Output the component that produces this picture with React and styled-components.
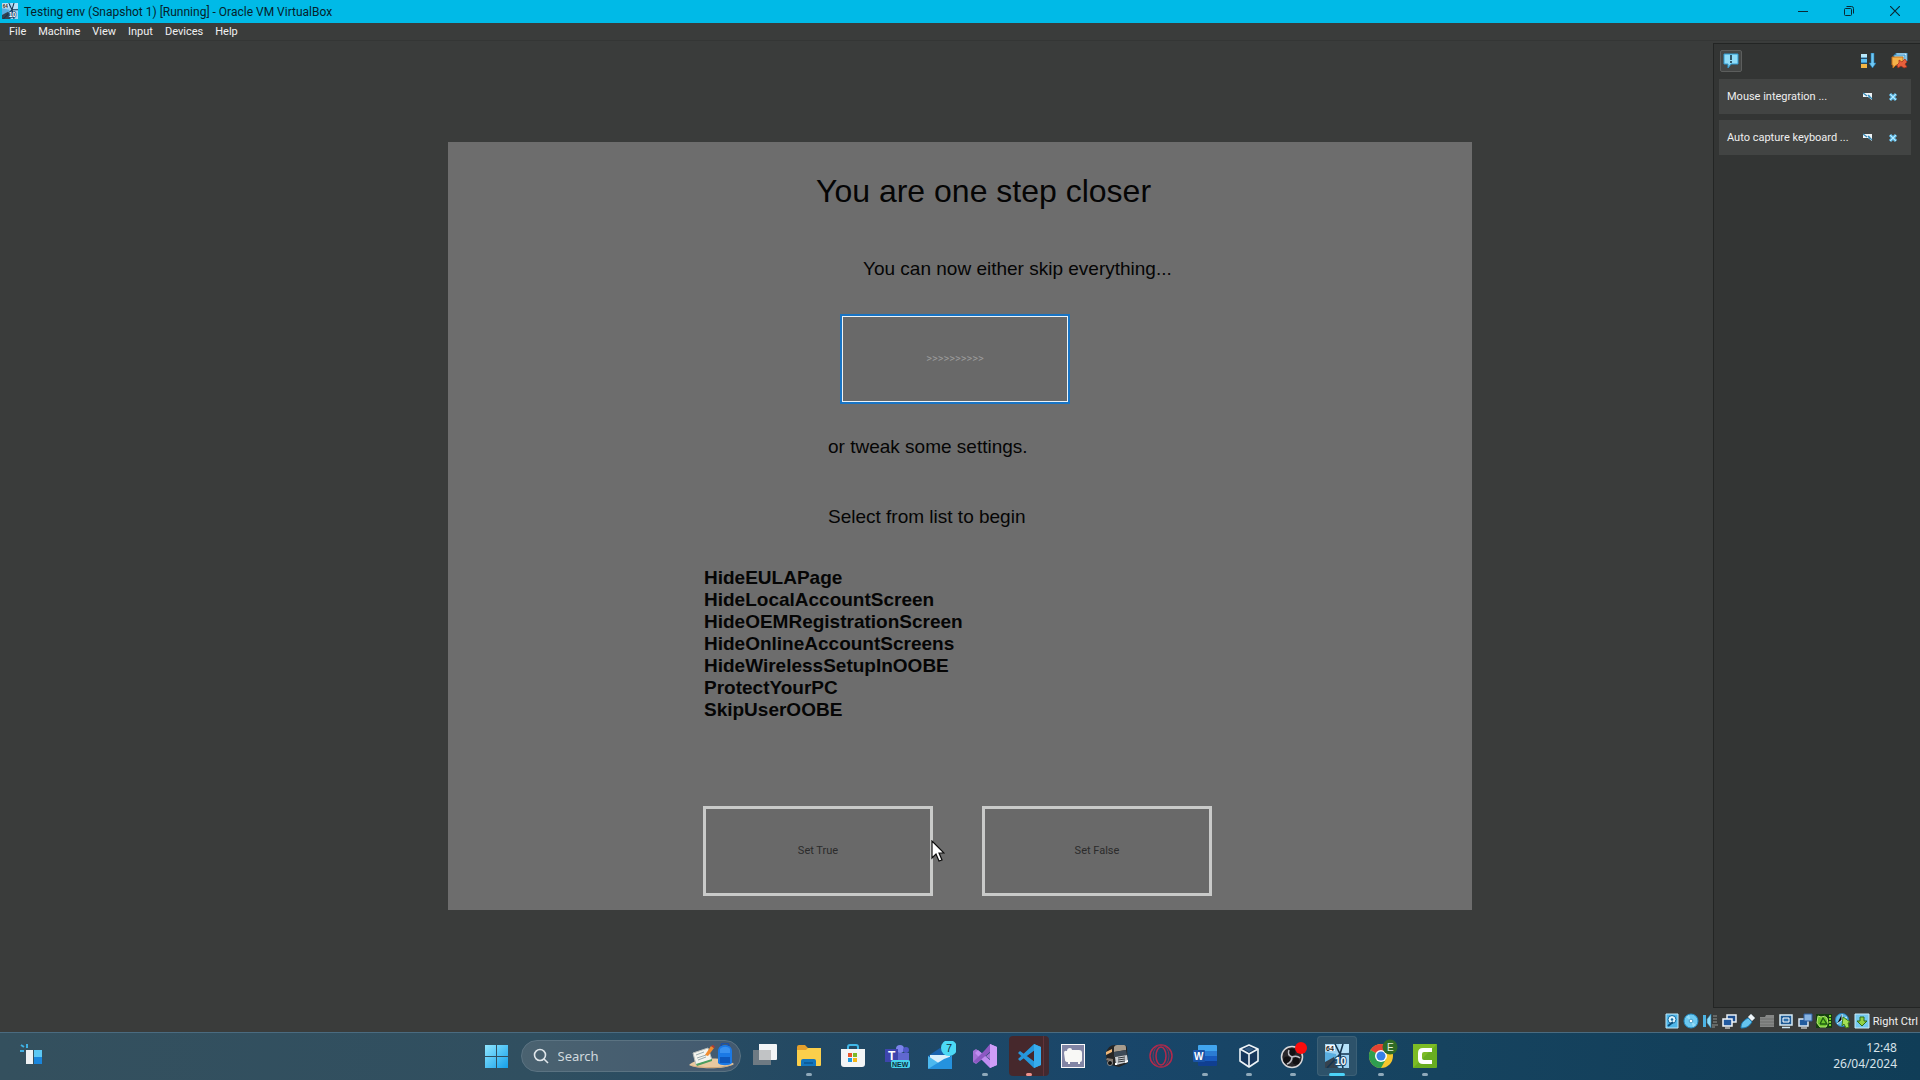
import React from "react";
import styled, { createGlobalStyle } from "styled-components";

const uiFont = '"Noto Sans", "Open Sans", sans-serif';
const windowFont = 'Roboto, "Noto Sans", sans-serif';
const guestFont = '"Liberation Sans", Arial, sans-serif';

const GlobalStyle = createGlobalStyle`
  *, *::before, *::after { box-sizing: border-box; }
  body { margin: 0; background: #3a3c3b; font-family: ${uiFont}; }
  button, input { font: inherit; color: inherit; }
  button { border: 0; padding: 0; background: none; cursor: default; }
  svg { display: block; flex: none; }
`;

const Desktop = styled.div`
  min-height: 100vh;
  display: flex;
  flex-direction: column;
`;

/* ---- window frame ---- */
const TitleBar = styled.header`
  display: flex;
  align-items: center;
  height: 23px;
  padding: 0 2px 2px;
  gap: 6px;
  background: #00bae7;
  color: #06222b;
`;
const Title = styled.h1`
  flex: 1;
  margin: 0;
  padding-top: 2px;
  font-family: ${windowFont};
  font-size: 12px;
  line-height: 20px;
  font-weight: 400;
`;
const Caption = styled.button`
  display: flex;
  justify-content: center;
  width: 46px;
`;
const CaptionGroup = styled.div`
  display: flex;
`;
const MenuBar = styled.nav`
  display: flex;
  height: 18px;
  padding: 0 3px;
  border-bottom: 1px solid #343635;
  color: #f0f0f0;
  font-family: ${windowFont};
`;
const MenuItem = styled.button`
  padding: 0 6px;
  font-size: 11px;
  line-height: 18px;
`;
const Viewport = styled.main`
  position: relative;
  flex: 1;
  display: flex;
  align-items: center;
  justify-content: center;
`;

/* ---- guest display ---- */
const Guest = styled.section`
  width: 1024px;
  max-width: 100%;
  min-height: 768px;
  padding: 31px 255px 14px;
  display: flex;
  flex-direction: column;
  align-items: flex-start;
  background: #6d6d6d;
  color: #050505;
  font-family: ${guestFont};
  font-size: 19px;
  line-height: 24px;
`;
const Heading = styled.h2`
  margin: 0 0 48px 113px;
  font-size: 32px;
  line-height: 36px;
  font-weight: 400;
  white-space: nowrap;
`;
const Lead = styled.p`
  margin: 0 0 ${(p) => p.$after}px ${(p) => p.$indent}px;
  white-space: nowrap;
`;
const PushButton = styled.button`
  width: 230px;
  height: 90px;
  background: #696969;
  border: 3px solid #c9cac9;
  color: #2b2b2b;
  font-family: ${windowFont};
  font-size: 11px;
`;
const SkipButton = styled(PushButton)`
  margin: 0 0 31px 137px;
  border: 2px solid #1874c4;
  box-shadow: inset 0 0 0 1px #eef4f8;
  color: #9c9c9c;
`;
const SettingList = styled.ul`
  margin: 0 0 auto;
  padding: 0 1px;
  list-style: none;
  font-weight: 700;
  line-height: 22px;
`;
const Actions = styled.div`
  display: flex;
  gap: 49px;
`;
const Pointer = styled.div`
  position: absolute;
  left: calc(50% - 29px);
  top: calc(50% + 314px);
`;

/* ---- notification centre ---- */
const Panel = styled.aside`
  position: absolute;
  top: 2px;
  right: 0;
  bottom: 3px;
  width: 207px;
  padding: 6px 9px 0 5px;
  display: flex;
  flex-direction: column;
  gap: 6px;
  background: #333534;
  border: 1px solid #232524;
  border-right: 0;
  color: #eeeeee;
`;
const PanelTools = styled.div`
  display: flex;
  align-items: center;
  gap: 15px;
  height: 22px;
  margin-bottom: 1px;
  padding: 0 3px 0 1px;
`;
const Toggle = styled.button`
  display: flex;
  align-items: center;
  justify-content: center;
  width: 22px;
  height: 22px;
  margin-right: auto;
  background: #444645;
  border: 1px solid #5c5e5d;
  border-radius: 2px;
`;
const Notice = styled.article`
  display: flex;
  align-items: center;
  justify-content: space-between;
  height: 35px;
  padding: 0 13px 0 8px;
  background: #424443;
  font-family: ${windowFont};
  font-size: 11px;
`;
const NoticeText = styled.span`
  white-space: nowrap;
`;
const NoticeTools = styled.div`
  display: flex;
  gap: 15px;
`;

/* ---- status bar ---- */
const StatusBar = styled.footer`
  display: flex;
  align-items: center;
  justify-content: flex-end;
  height: 21px;
  gap: 3px;
  padding: 0 2px 2px 0;
  color: #f0f0f0;
  font-family: ${windowFont};
  font-size: 11px;
`;
const HostKey = styled.span`
  padding-top: 2px;
`;

/* ---- taskbar ---- */
const Taskbar = styled.nav`
  display: grid;
  grid-template-columns: 1fr auto 1fr;
  align-items: center;
  height: 48px;
  padding-bottom: 1px;
  border-top: 1px solid #4a6b80;
  background: linear-gradient(90deg, #34505e 0%, #304f60 28%, #234963 42%, #19466a 58%, #16435f 75%, #103d57 100%);
`;
const Widgets = styled.button`
  justify-self: start;
  margin-left: 20px;
`;
const Apps = styled.div`
  display: flex;
  align-items: center;
`;
const TaskButton = styled.button`
  display: flex;
  align-items: center;
  justify-content: center;
  position: relative;
  width: 40px;
  height: 40px;
  margin: 0 2px;
  border-radius: 4px;
  background: ${(p) => p.$tile || "none"};
  box-shadow: ${(p) => (p.$ring ? `inset 0 0 0 1px ${p.$ring}` : "none")};
  &::after {
    content: "";
    position: absolute;
    left: calc(50% - ${(p) => (p.$wide ? 8 : 3)}px);
    bottom: 0;
    width: ${(p) => (p.$wide ? 16 : 6)}px;
    height: 3px;
    border-radius: 2px;
    background: ${(p) => p.$mark || "none"};
  }
`;
const SearchBox = styled.label`
  display: flex;
  align-items: center;
  width: 220px;
  height: 32px;
  margin: 0 2px 0 3px;
  padding: 0 5px 0 11px;
  gap: 9px;
  border: 1px solid #5b7382;
  border-radius: 16px;
  background: linear-gradient(90deg, #4a6270, #435a70);
  color: #d5dde2;
`;
const SearchInput = styled.input.attrs({ type: "text" })`
  flex: 1;
  min-width: 0;
  padding: 0;
  border: 0;
  outline: 0;
  background: none;
  font-size: 13px;
  line-height: 20px;
  &::placeholder { color: #d0d9de; opacity: 1; }
`;
const Clock = styled.time`
  justify-self: end;
  padding-right: 23px;
  text-align: right;
  color: #d7e3ea;
  font-size: 12px;
  line-height: 16px;
`;
const ClockLine = styled.span`
  display: block;
`;

const Svg = ({ w = 24, h = w, vb, children }) => (
  <svg width={w} height={h} viewBox={vb || `0 0 ${w} ${h}`} aria-hidden="true">{children}</svg>
);

const VmIcon = ({ size }) => (
  <Svg w={size} vb="0 0 24 24">
    <rect width="24" height="24" fill="#9fd3f2" />
    <path d="M0 8l11 2 3 14H0z" fill="#5aaee0" />
    <path d="M14 0h10v8l-9 3z" fill="#b7e2f8" />
    <path d="M0 18l9-5 4 11H0z" fill="#35424e" />
    <path d="M10 0l5 10 9 0M15 10L2 24M15 10l3 14M18 0l-3 10" stroke="#16354f" strokeWidth="1.600" fill="none" />
    <rect x="1" y="1" width="9" height="6" fill="#f6f6f6" />
    <text x="1" y="7" fontSize="7" fontWeight="700" fontFamily="Liberation Sans" fill="#222">64</text>
    <text x="10" y="21" fontSize="10" fontWeight="700" fontFamily="Liberation Sans" fill="#fff" stroke="#1b4768" strokeWidth="2" paintOrder="stroke">10</text>
  </Svg>
);

const Bubble = () => (
  <Svg w={16}>
    <path d="M1 1h14v10H8l-3 4v-4H1z" fill="#8fdcf8" stroke="#2e9ad0" />
    <path d="M8 2v5M8 8v2" stroke="#102a38" strokeWidth="1.500" />
  </Svg>
);
const SortIcon = () => (
  <Svg w={16}>
    <path d="M1 1h6v4H1z" fill="#b9e9fb" /><path d="M1 6h6v4H1z" fill="#5fbff0" /><path d="M1 11h6v4H1z" fill="#f2b544" />
    <path d="M1 5h6M1 10h6" stroke="#1a6ea8" />
    <path d="M11 0h3v10h2l-3.500 5L9 10h2z" fill="#6fc8f3" stroke="#1b77b4" strokeWidth=".6" />
  </Svg>
);
const ClearIcon = () => (
  <Svg w={17} h={16}>
    <path d="M5 0h11v8H5z" fill="#d6effb" stroke="#378fc6" /><path d="M3 2h11v8H3z" fill="#9bd8f4" stroke="#378fc6" />
    <path d="M1 4h11v8H5l-3 3v-3H1z" fill="#f5b34a" stroke="#c9731d" />
    <path d="M8 7l3 2 3-3 2 3-2 2 2 3-3 1-3-2-3 2-1-3 2-2z" fill="#e8603c" stroke="#a52d1a" strokeWidth=".7" />
  </Svg>
);
const DetailIcon = () => (
  <Svg w={10} h={10}>
    <path d="M0 1h9v7L5 5H0z" fill="#eef4f7" /><path d="M0 1l4 3M5 3l4 4M6 3v3" stroke="#3388b5" strokeWidth="1.200" />
  </Svg>
);
const DismissIcon = () => (
  <Svg w={10}>
    <path d="M2 2l6 6M8 2L2 8" stroke="#68c6f3" strokeWidth="3" />
    <path d="M2 2l6 6M8 2L2 8" stroke="#b8e9fd" strokeWidth="1" />
  </Svg>
);

const statusIcons = [
  ["Hard disks", <><path d="M2 1h12v14H2z" fill="#4fb6e8" stroke="#bfe8fa" /><circle cx="8" cy="6.500" r="4" fill="#dff4fd" stroke="#126a9e" /><circle cx="8" cy="6.500" r="1.300" fill="#126a9e" /><path d="M4 13l5-4" stroke="#0b4e7c" strokeWidth="2" /></>],
  ["Optical drives", <><circle cx="8" cy="8" r="7" fill="#6cc9f1" stroke="#248dc4" /><path d="M8 8L3 4l3-2zM8 8l5 4-3 2z" fill="#93dbf7" /><circle cx="8" cy="8" r="1.800" fill="#f5fcff" stroke="#0f6fa5" strokeWidth=".6" /></>],
  ["Audio", <><path d="M1 2h3v12H1z" fill="#4cb4e4" /><path d="M5 6l4-5v14l-4-5z" fill="#8fdbf8" stroke="#2279a8" strokeWidth=".6" /><path d="M11 3h4M11 6h4M11 9h4M10 12h6M10 14h3" stroke="#747776" strokeWidth="1.500" /></>],
  ["Network", <><path d="M6 2h9v7H6z" fill="#1d4f91" stroke="#e9eff5" strokeWidth="1.500" /><path d="M2 6h9v7H2z" fill="#21599f" stroke="#f2f6fa" strokeWidth="1.500" /><path d="M4 15h5" stroke="#fff" /></>],
  ["USB", <><path d="M1 15c0-5 2-7 7-10l4 4c-3 4-5 6-11 6z" fill="#65c4ef" stroke="#1c7fb9" /><path d="M8 4l3-3 4 4-3 3z" fill="#f0f5f8" stroke="#9fb1bb" strokeWidth=".6" /></>],
  ["Shared folders", <><path d="M1 4h5l1-2h8v12H1z" fill="#858786" /><path d="M1 6h14M1 9h14M1 12h14" stroke="#6c6e6d" /></>],
  ["Display", <><path d="M2 2h12v10H2z" fill="#1e5a94" stroke="#d7ebf6" strokeWidth="1.500" /><path d="M5 5h6v4H5z" fill="#2b70ae" stroke="#fff" /><path d="M4 14.500h8" stroke="#cde7f5" strokeWidth="1.500" /></>],
  ["Recording", <><path d="M2 6h9v7H2z" fill="#215b9e" stroke="#dce9f5" strokeWidth="1.500" /><path d="M7 1h8v7H7z" fill="#86b2e0" stroke="#2d5fa0" /><path d="M4 15h6" stroke="#fff" /></>],
  ["Processor", <><path d="M0 1h16v14H0z" fill="#153f10" /><path d="M2 3l3 1q4-2 6 1l1 5-2 4H4l-3-4z" fill="#6cc62c" stroke="#b7e979" /><path d="M4 11l3-6 4 6H4" stroke="#1d5c10" strokeWidth="1.300" fill="none" /><path d="M14 2v12" stroke="#7ad52f" strokeWidth="2" strokeDasharray="2 1" /></>],
  ["Mouse integration", <><circle cx="7" cy="7" r="6.500" fill="#5fb9e8" stroke="#297eb5" /><path d="M7 1v6L2 11M7 7l5-3" stroke="#d9f2fd" /><path d="M8 4l7 5-2 1 1 4-3 1-2-4-2 2z" fill="#a5e055" stroke="#3f7e17" /></>],
  ["Keyboard capture", <><path d="M1 1h14v14H1z" fill="#75c9ef" stroke="#c9ebf9" /><path d="M6 4h4v4h3l-5 5-5-5h3z" fill="#93d243" stroke="#2f6c19" /></>],
];

const Search = () => (
  <Svg w={16}>
    <circle cx="7" cy="7" r="5.500" fill="none" stroke="#e0e6ea" strokeWidth="1.600" /><path d="M11 11l4 4" stroke="#e0e6ea" strokeWidth="1.600" />
  </Svg>
);
const School = () => (
  <Svg w={46} h={26}>
    <path d="M0 22c8-8 35-9 45-1-6 5-36 6-45 1z" fill="#e9c9a0" /><path d="M1 22c12 3 34 3 43-1-6 5-35 5-43 1z" fill="#c99e6c" />
    <path d="M4 10l15-5 4 12-16 5z" fill="#f3f3ee" stroke="#b7bdba" /><path d="M7 21l16-5v2L8 23z" fill="#4b9e5f" />
    <path d="M7 12l8-3M8 15l9-3M9 17l8-3" stroke="#9aabae" /><path d="M16 12l6-9 3 2-6 8z" fill="#f18b2e" /><path d="M22 3l2-1 2 2-1 1z" fill="#b8392d" />
    <path d="M29 20V8c0-8 14-8 14 0v12c-2 3-12 3-14 0z" fill="#1b79e5" /><path d="M32 3c0-4 8-4 8 0" fill="none" stroke="#1b4fa8" strokeWidth="1.500" />
    <path d="M31 6c3-3 8-3 10 0v4H31z" fill="#3991f0" /><path d="M31 14h10v6H31z" fill="#0d58bd" />
  </Svg>
);

const icons = {
  start: <Svg><defs><linearGradient id="st" x1="0" y1="0" x2="1" y2="1"><stop stopColor="#8fe6ff" /><stop offset="1" stopColor="#14a0ea" /></linearGradient></defs><path d="M1 1h11v11H1zM13 1h11v11H13zM1 13h11v11H1zM13 13h11v11H13z" fill="url(#st)" /></Svg>,
  taskview: <Svg><path d="M6 0h17q1 0 1 1v14q0 1-1 1H6z" fill="#f2f4f6" /><path d="M0 6h18v15H0z" fill="#8a8d90" fillOpacity=".72" /><path d="M6 6h12v10H6z" fill="#c1c3c5" /></Svg>,
  explorer: <Svg><path d="M0 3q0-2 2-2h6l3 3h11q2 0 2 2v14H0z" fill="#e5a02c" /><path d="M0 6h9l2-2h13v17q0 1-1 1H1q-1 0-1-1z" fill="#fbcf4b" /><path d="M4 22v-5q0-2 2-2h11q2 0 2 2v5z" fill="#1476bd" /><path d="M7 18h9v2H7z" fill="#0d5d9b" /></Svg>,
  store: <Svg><path d="M7 6V3q0-2 2-2h6q2 0 2 2v3" fill="none" stroke="#40b7e8" strokeWidth="2" /><path d="M0 5h24v15q0 3-3 3H3q-3 0-3-3z" fill="#f3f5f6" /><path d="M7 9h4v4H7z" fill="#e9552c" /><path d="M12 9h4v4h-4z" fill="#7cb928" /><path d="M7 14h4v4H7z" fill="#1d9be2" /><path d="M12 14h4v4h-4z" fill="#f6b817" /></Svg>,
  teams: <Svg w={26} h={24}><circle cx="16" cy="5" r="4" fill="#7b83eb" /><circle cx="22" cy="6" r="3" fill="#5059c9" /><path d="M10 9h15v8q-2 5-7 5h-8z" fill="#6068d0" /><path d="M1 5h13v13H1z" fill="#3e45ae" /><text x="4" y="16" fontFamily="Liberation Sans" fontSize="12" fontWeight="700" fill="#fff">T</text><rect x="7" y="16" width="19" height="8" rx="2" fill="#46d2ea" /><text x="8" y="23" fontFamily="Liberation Sans" fontSize="7" fontWeight="700" fill="#102f3d">NEW</text></Svg>,
  mail: <svg width="30" height="30" viewBox="-2 -5 30 30" aria-hidden="true"><path d="M0 10L12 2l12 8v13H0z" fill="#1a62ae" /><path d="M2 9h20v9H2z" fill="#d8eefb" /><path d="M0 10l12 8 12-8v12q0 1-1 1H1q-1 0-1-1z" fill="#4cb9ef" /><path d="M0 23l16-10 8-3v13z" fill="#2592de" /><circle cx="21" cy="2" r="8" fill="#4cd9f6" /><text x="18" y="6" fontFamily="Liberation Sans" fontSize="11" fill="#15323c">7</text></svg>,
  vs: <Svg><path d="M0 7l3-2 15 11V8L3 20l-3-2V7z" fill="#a372d5" /><path d="M17 0l7 3v18l-7 3L2 9l3-3 12 10z" fill="#c08cf0" /><path d="M17 0v8L4 19l-4-1 12-12z" fill="#8c58c2" /><path d="M17 0l7 3v18l-7 3z" fill="#cf9df8" /></Svg>,
  code: <Svg><path d="M17 0l7 3v18l-7 3L1 9l2-2 15 11V6L3 17l-2-2z" fill="#2597dc" /><path d="M17 0l7 3v18l-7 3z" fill="#37aced" /><path d="M17 7v10l-6-5z" fill="#46282c" /></Svg>,
  video: <Svg><rect width="24" height="24" fill="#fafafa" /><rect x="1" y="1" width="22" height="22" fill="#8185a5" /><path d="M3 9q0-3 3-2 0-3 3-3 2 0 2 2h7q3 0 3 3v7q0 2-2 2v2h-2v-2H9v2H7v-2q-3 0-3-2z" fill="#f8f8f6" /></Svg>,
  truck: <Svg><path d="M1 9q2-8 9-8h9q3 0 3 4l1 14-9 4-12-3z" fill="#252525" /><path d="M9 3q1-2 3-2h7q2 0 2 3v2L9 8z" fill="#a79c8d" /><path d="M9 8l12-2 1 5-13 2z" fill="#3d4a57" /><path d="M10 13l12-2 1 7-12 3z" fill="#c9cdd1" /><path d="M13 14l7-1M13 16l7-1M13 18l7-1" stroke="#33373b" /><path d="M1 8l6-3v3L1 11z" fill="#f0b879" /><path d="M2 14l6 1v3l-7-2z" fill="#85776b" /><circle cx="5" cy="19" r="2.500" fill="#111" stroke="#8f8f8f" /><path d="M20 17l3-1v2l-3 1zM10 19h2v2h-2z" fill="#fff" /></Svg>,
  opera: <Svg><circle cx="12" cy="12" r="11" fill="none" stroke="#b5294b" strokeWidth="1.500" /><ellipse cx="12" cy="12" rx="5" ry="9" fill="none" stroke="#b5294b" strokeWidth="1.500" /><ellipse cx="12" cy="12" rx="8" ry="11" fill="none" stroke="#873052" /></Svg>,
  word: <Svg><path d="M6 1h17q1 0 1 1v5H5V2q0-1 1-1z" fill="#41a5ee" /><path d="M5 7h19v5H5z" fill="#2b7cd3" /><path d="M5 12h19v5H5z" fill="#185abd" /><path d="M5 17h19v4q0 1-1 1H6q-1 0-1-1z" fill="#103f91" /><rect y="6" width="12" height="12" rx="1" fill="#1a54a8" /><text x="1" y="16" fontFamily="Liberation Sans" fontSize="10" fontWeight="700" fill="#fff">W</text></Svg>,
  vbox: <Svg><path d="M12 1l9 4v12l-9 6-9-6V5z" fill="#16375c" stroke="#eef4f8" strokeWidth="1.600" strokeLinejoin="round" /><path d="M3 5l9 5 9-5M12 10v13" fill="none" stroke="#eef4f8" strokeWidth="1.600" /><path d="M12 3l5 2-5 3-5-3z" fill="#335b83" /></Svg>,
  obs: <svg width="30" height="30" viewBox="-3 -4 30 30" aria-hidden="true"><circle cx="11" cy="12" r="10.500" fill="#29272b" stroke="#d8d8da" strokeWidth="1.500" /><circle cx="11" cy="7" r="3.500" fill="#111013" /><circle cx="6" cy="15" r="3.500" fill="#111013" /><circle cx="15" cy="16" r="3.500" fill="#111013" /><path d="M11 12Q6 10 8 5M11 12q5-2 8 1M11 12q0 5-5 7" fill="none" stroke="#bdbdc3" strokeWidth="1.500" /><circle cx="20" cy="3" r="6" fill="#fb0d0d" /></svg>,
  vm: <VmIcon size={24} />,
  chrome: <svg width="34" height="34" viewBox="-5 -5 34 34" aria-hidden="true"><circle cx="12" cy="12" r="12" fill="#f6c62c" /><path d="M12 12L1.600 6A12 12 0 0 1 22.400 6z" fill="#e34334" /><path d="M1.600 6A12 12 0 0 0 12 24l5-9z" fill="#2f9e4f" /><circle cx="12" cy="12" r="6" fill="#fff" /><circle cx="12" cy="12" r="4.500" fill="#377fe8" /><circle cx="21" cy="3" r="7.500" fill="#2f6b26" /><text x="18" y="7" fontFamily="Liberation Sans" fontSize="10" fill="#e2f0dc">E</text></svg>,
  camtasia: <Svg><rect width="24" height="24" rx="1" fill="#69ad21" /><path d="M0 0h24L0 24z" fill="#7dbc25" /><path d="M19 4H10q-5 0-5 5v6q0 5 5 5h9v-4h-8q-2 0-2-2v-4q0-2 2-2h8z" fill="#fff" /></Svg>,
};

const grey = "#8fa9ba";
const apps = [
  { id: "taskview", label: "Task view" },
  { id: "explorer", label: "File Explorer", mark: grey },
  { id: "store", label: "Microsoft Store" },
  { id: "teams", label: "Microsoft Teams" },
  { id: "mail", label: "Mail" },
  { id: "vs", label: "Visual Studio", mark: grey },
  { id: "code", label: "Visual Studio Code", mark: "#f0928b", tile: "linear-gradient(90deg, #46282c 34px, #60343a 34px, #60343a 35px, #42292f 35px)" },
  { id: "video", label: "Recorder" },
  { id: "truck", label: "Truck Simulator" },
  { id: "opera", label: "Opera" },
  { id: "word", label: "Word", mark: grey },
  { id: "vbox", label: "VirtualBox Manager", mark: grey },
  { id: "obs", label: "OBS Studio", mark: grey },
  { id: "vm", label: "Virtual machine", mark: "#4cd2f8", tile: "#2d526a", ring: "#3c6076", wide: true },
  { id: "chrome", label: "Chrome", mark: grey },
  { id: "camtasia", label: "Camtasia", mark: grey },
];

const menus = ["File", "Machine", "View", "Input", "Devices", "Help"];
const notices = ["Mouse integration ...", "Auto capture keyboard ..."];
const settings = [
  "HideEULAPage",
  "HideLocalAccountScreen",
  "HideOEMRegistrationScreen",
  "HideOnlineAccountScreens",
  "HideWirelessSetupInOOBE",
  "ProtectYourPC",
  "SkipUserOOBE",
];

export default function App() {
  return (
    <Desktop>
      <GlobalStyle />
      <TitleBar>
        <VmIcon size={16} />
        <Title>Testing env (Snapshot 1) [Running] - Oracle VM VirtualBox</Title>
        <CaptionGroup>
          <Caption aria-label="Minimize"><Svg w={10}><path d="M0 5.500h10" stroke="#0a2a35" /></Svg></Caption>
          <Caption aria-label="Restore"><Svg w={10}><rect x=".5" y="2.500" width="7" height="7" rx="1" fill="none" stroke="#0a2a35" /><path d="M2.500 .5h5q2 0 2 2v5" fill="none" stroke="#0a2a35" /></Svg></Caption>
          <Caption aria-label="Close"><Svg w={10}><path d="M0 0l10 10M10 0L0 10" stroke="#0a2a35" strokeWidth="1.200" /></Svg></Caption>
        </CaptionGroup>
      </TitleBar>
      <MenuBar>
        {menus.map((m) => <MenuItem key={m}>{m}</MenuItem>)}
      </MenuBar>

      <Viewport>
        <Guest>
          <Heading>You are one step closer</Heading>
          <Lead $indent={160} $after={33}>You can now either skip everything...</Lead>
          <SkipButton>&gt;&gt;&gt;&gt;&gt;&gt;&gt;&gt;&gt;&gt;</SkipButton>
          <Lead $indent={125} $after={46}>or tweak some settings.</Lead>
          <Lead $indent={125} $after={38}>Select from list to begin</Lead>
          <SettingList>
            {settings.map((s) => <li key={s}>{s}</li>)}
          </SettingList>
          <Actions>
            <PushButton>Set True</PushButton>
            <PushButton>Set False</PushButton>
          </Actions>
        </Guest>
        <Pointer>
          <Svg w={14} h={22}><path d="M1 1v17l4-4 3 7 3-1-3-7h5z" fill="#fff" stroke="#0c0c0c" strokeWidth="1.200" /></Svg>
        </Pointer>
        <Panel>
          <PanelTools>
            <Toggle aria-label="Notifications"><Bubble /></Toggle>
            <button aria-label="Sort"><SortIcon /></button>
            <button aria-label="Remove all"><ClearIcon /></button>
          </PanelTools>
          {notices.map((n) => (
            <Notice key={n}>
              <NoticeText>{n}</NoticeText>
              <NoticeTools>
                <button aria-label="Details"><DetailIcon /></button>
                <button aria-label="Dismiss"><DismissIcon /></button>
              </NoticeTools>
            </Notice>
          ))}
        </Panel>
      </Viewport>

      <StatusBar>
        {statusIcons.map(([label, art]) => (
          <button key={label} aria-label={label}><Svg w={16}>{art}</Svg></button>
        ))}
        <HostKey>Right Ctrl</HostKey>
      </StatusBar>

      <Taskbar>
        <Widgets aria-label="Widgets">
          <Svg w={24} h={24}>
            <path d="M6 6h7v14H6z" fill="#eef1f3" /><path d="M14 6h8v7h-8z" fill="#5cc8f4" /><path d="M14 13h8v7h-8z" fill="#1a86dc" />
            <path d="M7 0v4M1 1l3 2M0 7h4" stroke="#3fb0e3" strokeWidth="2" />
          </Svg>
        </Widgets>
        <Apps>
          <TaskButton aria-label="Start">{icons.start}</TaskButton>
          <SearchBox>
            <Search />
            <SearchInput placeholder="Search" aria-label="Search" />
            <School />
          </SearchBox>
          {apps.map((a) => (
            <TaskButton key={a.id} aria-label={a.label} $mark={a.mark} $tile={a.tile} $ring={a.ring} $wide={a.wide}>
              {icons[a.id]}
            </TaskButton>
          ))}
        </Apps>
        <Clock dateTime="2024-04-26T12:48">
          <ClockLine>12:48</ClockLine>
          <ClockLine>26/04/2024</ClockLine>
        </Clock>
      </Taskbar>
    </Desktop>
  );
}
